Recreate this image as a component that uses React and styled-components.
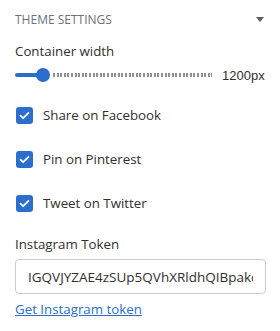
import React, { useState } from "react";
import styled, { createGlobalStyle } from "styled-components";

const GlobalStyle = createGlobalStyle`
	body {
		margin: 0;
		background: #ffffff;
		font-family: "Open Sans", "Noto Sans", sans-serif;
		color: #303030;
	}
`;

const options = [
	{ id: "facebook", label: "Share on Facebook" },
	{ id: "pinterest", label: "Pin on Pinterest" },
	{ id: "twitter", label: "Tweet on Twitter" },
];

function App() {
	const [checked, setChecked] = useState({
		facebook: true,
		pinterest: true,
		twitter: true,
	});
	const [width] = useState(1200);

	const toggle = (id) => setChecked({ ...checked, [id]: !checked[id] });

	return (
		<Panel>
			<GlobalStyle />
			<Header>
				<HeaderTitle>Theme settings</HeaderTitle>
				<Caret />
			</Header>

			<FieldLabel>Container width</FieldLabel>
			<SliderRow>
				<Track>
					<Fill />
					<Thumb />
					<Rest />
				</Track>
				<SliderValue>{width}px</SliderValue>
			</SliderRow>

			<CheckList>
				{options.map((o) => (
					<CheckRow key={o.id} onClick={() => toggle(o.id)}>
						<Box checked={checked[o.id]}>
							{checked[o.id] && (
								<svg width="11" height="9" viewBox="0 0 11 9">
									<path
										d="M1.5 4.6 L4.2 7.2 L9.5 1.8"
										fill="none"
										stroke="#ffffff"
										strokeWidth="1.8"
										strokeLinecap="round"
										strokeLinejoin="round"
									/>
								</svg>
							)}
						</Box>
						<CheckLabel>{o.label}</CheckLabel>
					</CheckRow>
				))}
			</CheckList>

			<TokenLabel>Instagram Token</TokenLabel>
			<TokenInput defaultValue="IGQVJYZAE4zSUp5QVhXRldhQIBpakdfSWZAkMmFqNkE" />
			<TokenLink href="#">Get Instagram token</TokenLink>
		</Panel>
	);
}

export default App;

const Panel = styled.div`
	width: 280px;
	box-sizing: border-box;
	padding: 9px 14px 0 15px;
	display: flex;
	flex-direction: column;
`;

const Header = styled.div`
	display: flex;
	align-items: center;
	justify-content: space-between;
	height: 20px;
`;

const HeaderTitle = styled.div`
	font-size: 12px;
	font-weight: 500;
	text-transform: uppercase;
	color: #6d7175;
	letter-spacing: 0;
`;

const Caret = styled.span`
	width: 0;
	height: 0;
	margin-right: 2px;
	border-left: 4px solid transparent;
	border-right: 4px solid transparent;
	border-top: 5px solid #5c5f62;
`;

const FieldLabel = styled.div`
	margin-top: 12px;
	font-size: 13.3px;
	line-height: 20px;
	color: #303030;
`;

const SliderRow = styled.div`
	display: flex;
	align-items: center;
	height: 18px;
	margin-top: 5px;
`;

const Track = styled.div`
	display: flex;
	align-items: center;
	width: 197px;
`;

const Fill = styled.div`
	width: 22px;
	height: 4px;
	border-radius: 2px 0 0 2px;
	background: #2c6ecb;
`;

const Thumb = styled.div`
	width: 14px;
	height: 14px;
	margin-left: -1px;
	border-radius: 50%;
	background: #2c6ecb;
`;

const Rest = styled.div`
	flex: 1;
	height: 4px;
	margin-left: 3px;
	background: repeating-linear-gradient(
		to right,
		#8c9196 0 2px,
		transparent 2px 3.6px
	);
`;

const SliderValue = styled.div`
	margin-left: 10px;
	font-family: "Liberation Sans", Arial, sans-serif;
	font-size: 13px;
	color: #303030;
`;

const CheckList = styled.div`
	display: flex;
	flex-direction: column;
	gap: 26px;
	margin-top: 22px;
`;

const CheckRow = styled.label`
	display: flex;
	align-items: center;
	gap: 10px;
	height: 18px;
	padding-left: 1px;
	cursor: pointer;
`;

const Box = styled.span`
	width: 17px;
	height: 17px;
	box-sizing: border-box;
	border-radius: 3px;
	display: flex;
	align-items: center;
	justify-content: center;
	background: ${(props) => (props.checked ? "#2c6ecb" : "#ffffff")};
	border: ${(props) => (props.checked ? "none" : "1px solid #8c9196")};
`;

const CheckLabel = styled.span`
	font-size: 13.3px;
	color: #303030;
`;

const TokenLabel = styled.div`
	margin-top: 22px;
	font-size: 13.3px;
	line-height: 20px;
	color: #303030;
`;

const TokenInput = styled.input`
	margin-top: 5px;
	height: 35px;
	box-sizing: border-box;
	width: 251px;
	padding: 0 12px;
	border: 1px solid #c9cccf;
	border-radius: 4px;
	font-family: "Open Sans", "Noto Sans", sans-serif;
	font-size: 13.5px;
	color: #303030;
	outline: none;
`;

const TokenLink = styled.a`
	margin-top: 5px;
	font-size: 13.3px;
	line-height: 20px;
	color: #2c6ecb;
	text-decoration: underline;
	align-self: flex-start;
`;
